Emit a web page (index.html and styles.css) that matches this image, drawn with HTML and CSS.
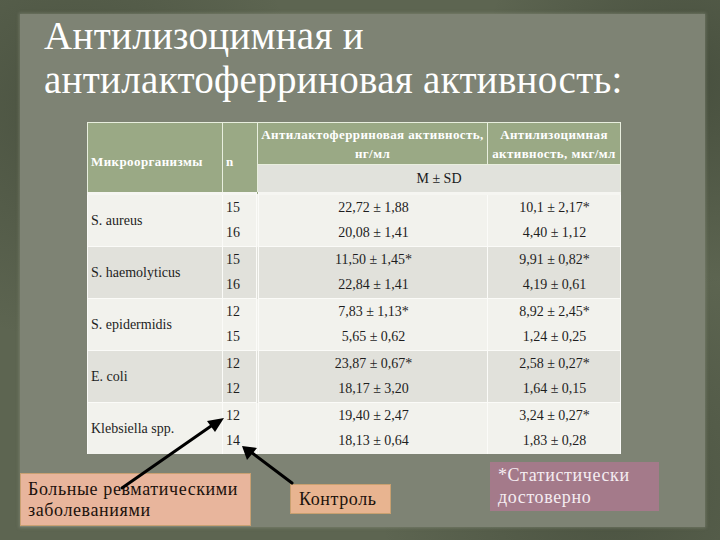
FILE: index.html
```html
<!DOCTYPE html>
<html lang="ru">
<head>
<meta charset="utf-8">
<link rel="stylesheet" href="styles.css">
</head>
<body>
<div class="slide">
  <div class="panel">
    <h1 class="title">Антилизоцимная и<br>антилактоферриновая активность:</h1>
    <table class="data">
      <colgroup>
        <col class="c1"><col class="c2"><col class="c3"><col class="c4">
      </colgroup>
      <thead>
        <tr class="h1row">
          <th rowspan="2" class="hl">Микроорганизмы</th>
          <th rowspan="2" class="hl">n</th>
          <th class="hc">Антилактоферриновая активность,<br>нг/мл</th>
          <th class="hc">Антилизоцимная<br>активность, мкг/мл</th>
        </tr>
        <tr class="h2row">
          <th colspan="2" class="msd">M ± SD</th>
        </tr>
      </thead>
      <tbody class="g light first">
        <tr><td rowspan="2" class="org">S. aureus</td><td class="n">15</td><td class="v">22,72 ± 1,88</td><td class="v">10,1 ± 2,17*</td></tr>
        <tr><td class="n">16</td><td class="v">20,08 ± 1,41</td><td class="v">4,40 ± 1,12</td></tr>
      </tbody>
      <tbody class="g dark">
        <tr><td rowspan="2" class="org">S. haemolyticus</td><td class="n">15</td><td class="v">11,50 ± 1,45*</td><td class="v">9,91 ± 0,82*</td></tr>
        <tr><td class="n">16</td><td class="v">22,84 ± 1,41</td><td class="v">4,19 ± 0,61</td></tr>
      </tbody>
      <tbody class="g light">
        <tr><td rowspan="2" class="org">S. epidermidis</td><td class="n">12</td><td class="v">7,83 ± 1,13*</td><td class="v">8,92 ± 2,45*</td></tr>
        <tr><td class="n">15</td><td class="v">5,65 ± 0,62</td><td class="v">1,24 ± 0,25</td></tr>
      </tbody>
      <tbody class="g dark">
        <tr><td rowspan="2" class="org">E. coli</td><td class="n">12</td><td class="v">23,87 ± 0,67*</td><td class="v">2,58 ± 0,27*</td></tr>
        <tr><td class="n">12</td><td class="v">18,17 ± 3,20</td><td class="v">1,64 ± 0,15</td></tr>
      </tbody>
      <tbody class="g light">
        <tr><td rowspan="2" class="org">Klebsiella spp.</td><td class="n">12</td><td class="v">19,40 ± 2,47</td><td class="v">3,24 ± 0,27*</td></tr>
        <tr><td class="n">14</td><td class="v">18,13 ± 0,64</td><td class="v">1,83 ± 0,28</td></tr>
      </tbody>
    </table>
    <div class="notes">
      <div class="note patients">Больные ревматическими<br>заболеваниями</div>
      <div class="note control">Контроль</div>
      <div class="note stat">*Статистически<br>достоверно</div>
    </div>
  </div>
  <svg class="arrows" width="720" height="540" viewBox="0 0 720 540">
    <g stroke="#000" stroke-width="3" fill="none" stroke-linecap="round">
      <line x1="122" y1="488" x2="214" y2="424"/>
      <line x1="292" y1="483" x2="251" y2="452"/>
    </g>
    <g fill="#000">
      <polygon points="224,418 207,421 215,432"/>
      <polygon points="242,446 247,460 257,448"/>
    </g>
  </svg>
</div>
</body>
</html>
```
FILE: styles.css
```css
html, body {
  margin: 0;
  padding: 0;
}
body {
  width: 720px;
  height: 540px;
  overflow: hidden;
  background: #5b6350;
  font-family: "Liberation Serif", "Times New Roman", serif;
}
.slide {
  position: relative;
  width: 720px;
  height: 540px;
  padding: 14px 15px 13px 20px;
  box-sizing: border-box;
  background:
    radial-gradient(circle at 10% 20%, rgba(40,48,34,0.35), transparent 30%),
    radial-gradient(circle at 85% 90%, rgba(40,48,34,0.35), transparent 30%),
    radial-gradient(circle at 95% 15%, rgba(30,38,26,0.35), transparent 25%),
    #5d6551;
}
.panel {
  height: 513px;
  background: #7e8374;
  box-shadow: 0 0 3px 1px rgba(160,166,150,0.35);
  display: flex;
  flex-direction: column;
}
.title {
  margin: 0 0 20px 24px;
  font-family: "Liberation Serif", "Times New Roman", serif;
  font-weight: normal;
  font-size: 39px;
  line-height: 44px;
  letter-spacing: 0.3px;
  color: #ffffff;
}
.data {
  margin-left: 67px;
  width: 533px;
  border-collapse: collapse;
  table-layout: fixed;
  font-family: "Liberation Serif", "Times New Roman", serif;
  color: #1e1e1e;
  font-size: 14px;
}
.c1 { width: 135px; }
.c2 { width: 35px; }
.c3 { width: 230px; }
.c4 { width: 133px; }
.data th {
  font-weight: bold;
  color: #ffffff;
  font-size: 13px;
  letter-spacing: 0.4px;
  border: 1px solid #e8eede;
}
.h1row { height: 42px; }
.h2row { height: 29px; }
.hl {
  background: #9aa985;
  text-align: left;
  padding: 8px 0 0 3px;
  vertical-align: middle;
}
.hc {
  background: #9aa985;
  text-align: center;
  line-height: 19px;
  padding: 0;
  vertical-align: middle;
  white-space: nowrap;
}
.data th.msd {
  background: #e1e2dc;
  color: #1a1a1a;
  font-weight: normal;
  font-size: 14px;
  letter-spacing: 0;
  text-align: center;
  padding-top: 2px;
}
.data td {
  height: 25.5px;
  padding: 0 2px 0 3px;
  border-left: 1px solid #fbfbf8;
  border-right: 1px solid #fbfbf8;
}
.g.first tr:first-child td {
  border-top: 3px solid #f6f6f2;
}
.g {
  border-top: 1px solid #fbfbf8;
}
.light td { background: #f2f2ed; }
.dark td { background: #e1e1db; }
.org {
  vertical-align: middle;
  text-align: left;
}
.n { text-align: left; }
.v { text-align: center; }
.data td.n { border-right: 3px double #fbfbf8; }
.notes {
  display: flex;
  align-items: flex-start;
  margin-top: 8px;
}
.note {
  font-family: "Liberation Serif", "Times New Roman", serif;
  box-sizing: border-box;
  font-size: 18px;
  letter-spacing: 0.6px;
}
.patients {
  margin-top: 11px;
  width: 231px;
  height: 53px;
  padding: 5px 0 0 7px;
  background: #e8b59c;
  border: 1px solid #c9a072;
  line-height: 21px;
  color: #1c120c;
}
.control {
  margin-top: 22px;
  margin-left: 39px;
  width: 101px;
  height: 30px;
  padding: 4px 0 0 8px;
  background: #e8b490;
  border: 1px solid #c9a070;
  line-height: 21px;
  color: #1c120c;
}
.stat {
  margin-left: 99px;
  width: 169px;
  height: 49px;
  padding: 2px 0 0 8px;
  background: #a47a8a;
  line-height: 22px;
  color: #f4ecf1;
}
.arrows {
  position: absolute;
  left: 0;
  top: 0;
  pointer-events: none;
}
```
